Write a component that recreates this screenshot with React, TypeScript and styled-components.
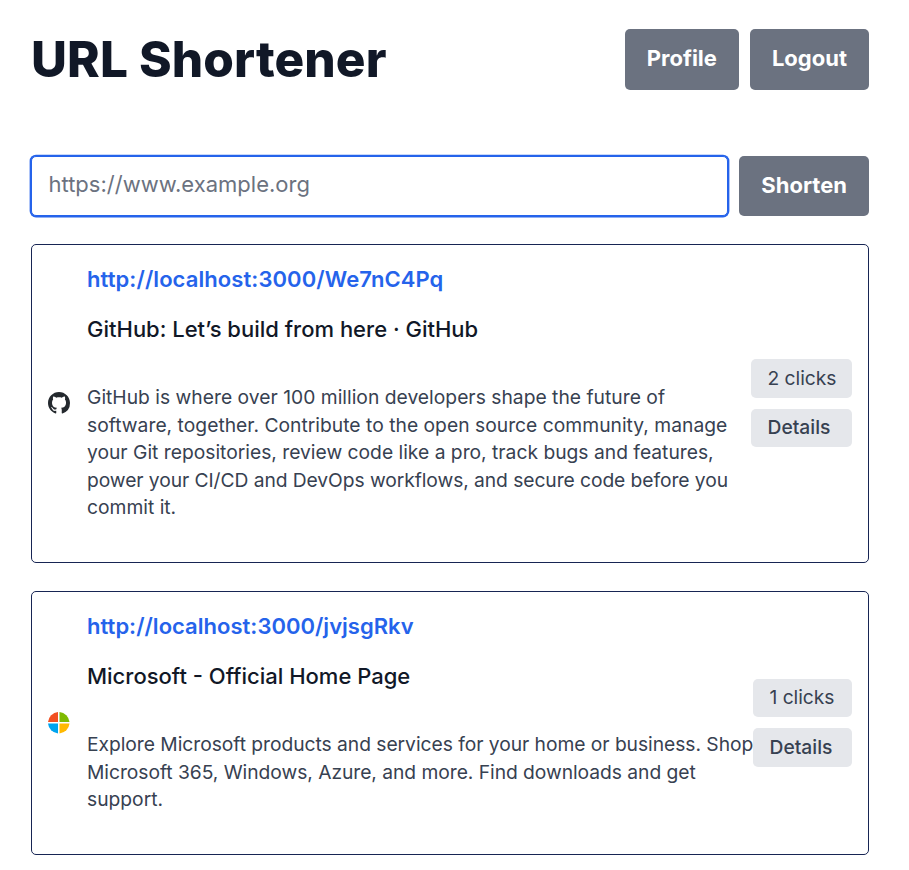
import React from "react";
import styled, { createGlobalStyle } from "styled-components";

const GlobalStyle = createGlobalStyle`
  *, *::before, *::after { box-sizing: border-box; }
  html { font-size: 22px; }
  body {
    margin: 0;
    background: #fff;
    color: #111827;
    font-family: Inter, "Liberation Sans", sans-serif;
    line-height: 1.5;
  }
  h1, p { margin: 0; }
`;

const Page = styled.main`
  width: 100%;
  padding: 29px 40px 0 31px;
`;

const Header = styled.header`
  display: flex;
  align-items: center;
  justify-content: space-between;
  margin-bottom: 66px;
`;

const Title = styled.h1`
  font-size: 2.25rem;
  line-height: 2.5rem;
  font-weight: 800;
  letter-spacing: 0.1px;
`;

const Actions = styled.nav`
  display: flex;
  gap: 11px;
`;

const Button = styled.button<{ $raised?: boolean }>`
  flex: none;
  height: 60.5px;
  padding: 0 1rem ${(p) => (p.$raised ? "2px" : "0")};
  border: 0;
  border-radius: 5px;
  background: #6b7280;
  color: #fff;
  font: 700 1rem/1.5 Inter, "Liberation Sans", sans-serif;
`;

const Form = styled.form`
  display: flex;
  gap: 11px;
  margin-bottom: 28px;
`;

const UrlInput = styled.input`
  flex: 1;
  min-width: 0;
  height: 60.5px;
  padding: 0 16.5px 3px;
  border: 1px solid #2563eb;
  border-radius: 5px;
  outline: 0;
  box-shadow: 0 0 0 1.375px #2563eb;
  background: #fff;
  font: 400 1rem/1.5 Inter, "Liberation Sans", sans-serif;
  &::placeholder { color: #6b7280; opacity: 1; }
`;

const List = styled.section`
  display: flex;
  flex-direction: column;
  gap: 28px;
`;

const Card = styled.article<{ $height: number }>`
  display: flex;
  align-items: center;
  height: ${(p) => p.$height}px;
  padding: 0 16px 0.8px;
  border: 1px solid #172554;
  border-radius: 5px;
`;

const Favicon = styled.svg`
  flex: none;
  width: 22px;
  height: 22px;
`;

const Info = styled.div`
  flex: none;
  align-self: flex-start;
  width: 648px;
  margin-left: 17px;
  padding-top: 17.5px;
`;

const ShortLink = styled.a<{ $tracking: number }>`
  display: block;
  color: #2563eb;
  font-weight: 600;
  letter-spacing: ${(p) => p.$tracking}px;
`;

const SiteTitle = styled.p`
  margin-top: 17px;
  font-weight: 500;
`;

const Description = styled.p`
  margin-top: 38.5px;
  color: #374151;
  font-size: 0.875rem;
  line-height: 1.25rem;
`;

const Line = styled.span<{ $tracking: number }>`
  display: block;
  white-space: nowrap;
  letter-spacing: ${(p) => p.$tracking}px;
`;

const Stats = styled.div<{ $width: number }>`
  display: flex;
  flex: none;
  flex-direction: column;
  gap: 11px;
  width: ${(p) => p.$width}px;
  margin-left: auto;
`;

const Pill = styled.span<{ $strong?: boolean }>`
  height: 38.5px;
  padding: 5.5px 0 5.5px 16.5px;
  border-radius: 5px;
  background: #e5e7eb;
  color: #374151;
  font-size: 0.875rem;
  line-height: 27.5px;
  font-weight: ${(p) => (p.$strong ? 500 : 400)};
  letter-spacing: ${(p) => (p.$strong ? 0 : -0.05)}px;
  white-space: nowrap;
`;

const GitHubIcon = () => (
  <Favicon viewBox="0 0 16 16">
    <path
      fill="#24292e"
      d="M8 0C3.58 0 0 3.58 0 8c0 3.54 2.29 6.53 5.47 7.59.4.07.55-.17.55-.38 0-.19-.01-.82-.01-1.49-2.01.37-2.53-.49-2.69-.94-.09-.23-.48-.94-.82-1.13-.28-.15-.68-.52-.01-.53.63-.01 1.08.58 1.23.82.72 1.21 1.87.87 2.33.66.07-.52.28-.87.51-1.07-1.78-.2-3.64-.89-3.64-3.95 0-.87.31-1.59.82-2.15-.08-.2-.36-1.02.08-2.12 0 0 .67-.21 2.2.82.64-.18 1.32-.27 2-.27s1.36.09 2 .27c1.53-1.04 2.2-.82 2.2-.82.44 1.1.16 1.92.08 2.12.51.56.82 1.27.82 2.15 0 3.07-1.87 3.75-3.65 3.95.29.25.54.73.54 1.48 0 1.07-.01 1.93-.01 2.2 0 .21.15.46.55.38A8.01 8.01 0 0 0 16 8c0-4.42-3.58-8-8-8z"
    />
  </Favicon>
);

const MicrosoftIcon = () => (
  <Favicon viewBox="0 0 22 22">
    <path fill="#f25022" d="M10 0v10H0A11 11 0 0 1 10 0z" />
    <path fill="#7fba00" d="M11.5 0A11 11 0 0 1 21.5 10h-10z" />
    <path fill="#00a4ef" d="M0 11.5h10v10A11 11 0 0 1 0 11.5z" />
    <path fill="#ffb900" d="M11.5 11.5h10a11 11 0 0 1-10 10z" />
  </Favicon>
);

const links = [
  {
    url: "http://localhost:3000/We7nC4Pq",
    urlTracking: 0.08,
    title: "GitHub: Let’s build from here · GitHub",
    description: [
      { text: "GitHub is where over 100 million developers shape the future of", tracking: 0.015 },
      { text: "software, together. Contribute to the open source community, manage", tracking: 0.02 },
      { text: "your Git repositories, review code like a pro, track bugs and features,", tracking: 0 },
      { text: "power your CI/CD and DevOps workflows, and secure code before you", tracking: -0.07 },
      { text: "commit it.", tracking: 0 },
    ],
    clicks: 2,
    height: 319,
    statsWidth: 101,
    Icon: GitHubIcon,
  },
  {
    url: "http://localhost:3000/jvjsgRkv",
    urlTracking: 0.02,
    title: "Microsoft - Official Home Page",
    description: [
      { text: "Explore Microsoft products and services for your home or business. Shop", tracking: -0.04 },
      { text: "Microsoft 365, Windows, Azure, and more. Find downloads and get", tracking: -0.045 },
      { text: "support.", tracking: 0 },
    ],
    clicks: 1,
    height: 264,
    statsWidth: 99,
    Icon: MicrosoftIcon,
  },
];

export default function App() {
  return (
    <Page>
      <GlobalStyle />
      <Header>
        <Title>URL Shortener</Title>
        <Actions>
          <Button $raised>Profile</Button>
          <Button $raised>Logout</Button>
        </Actions>
      </Header>
      <Form>
        <UrlInput placeholder="https://www.example.org" />
        <Button type="button">Shorten</Button>
      </Form>
      <List>
        {links.map(({ Icon, ...link }) => (
          <Card key={link.url} $height={link.height}>
            <Icon />
            <Info>
              <ShortLink $tracking={link.urlTracking}>{link.url}</ShortLink>
              <SiteTitle>{link.title}</SiteTitle>
              <Description>
                {link.description.map((line) => (
                  <Line key={line.text} $tracking={line.tracking}>
                    {line.text}
                  </Line>
                ))}
              </Description>
            </Info>
            <Stats $width={link.statsWidth}>
              <Pill>{link.clicks} clicks</Pill>
              <Pill $strong>Details</Pill>
            </Stats>
          </Card>
        ))}
      </List>
    </Page>
  );
}
